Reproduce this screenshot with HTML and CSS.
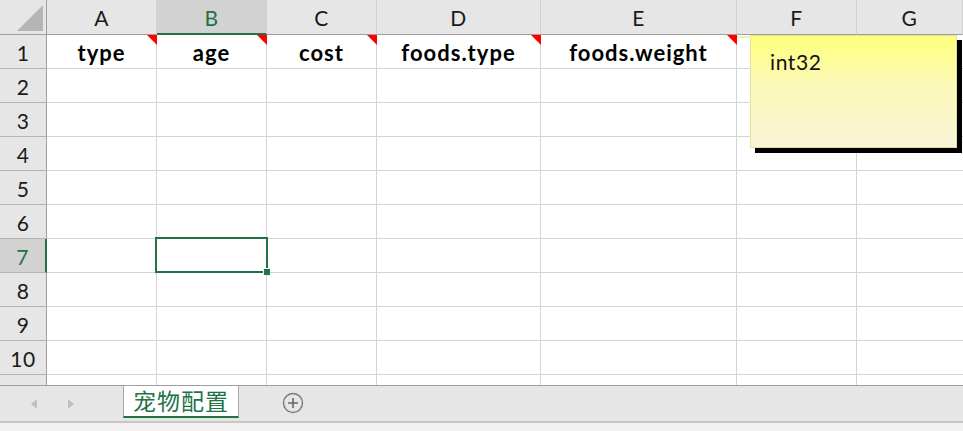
FILE: index.html
```html
<!DOCTYPE html>
<html lang="zh">
<head>
<meta charset="utf-8">
<title>宠物配置</title>
<link rel="stylesheet" href="styles.css">
</head>
<body>
<div class="app">
  <div class="sheet">
    <div class="corner"><span class="corner-tri"></span></div>
    <div class="colhead">A</div>
    <div class="colhead sel">B</div>
    <div class="colhead">C</div>
    <div class="colhead">D</div>
    <div class="colhead">E</div>
    <div class="colhead">F</div>
    <div class="colhead">G</div>

    <div class="rowhead">1</div>
    <div class="cell hdr">type<span class="note"></span></div>
    <div class="cell hdr">age<span class="note"></span></div>
    <div class="cell hdr">cost<span class="note"></span></div>
    <div class="cell hdr">foods.type<span class="note"></span></div>
    <div class="cell hdr">foods.weight<span class="note"></span></div>
    <div class="cell"></div>
    <div class="cell last"></div>

    <div class="rowhead">2</div>
    <div class="cell"></div><div class="cell"></div><div class="cell"></div><div class="cell"></div><div class="cell"></div><div class="cell"></div><div class="cell last"></div>
    <div class="rowhead">3</div>
    <div class="cell"></div><div class="cell"></div><div class="cell"></div><div class="cell"></div><div class="cell"></div><div class="cell"></div><div class="cell last"></div>
    <div class="rowhead">4</div>
    <div class="cell"></div><div class="cell"></div><div class="cell"></div><div class="cell"></div><div class="cell"></div><div class="cell"></div><div class="cell last"></div>
    <div class="rowhead">5</div>
    <div class="cell"></div><div class="cell"></div><div class="cell"></div><div class="cell"></div><div class="cell"></div><div class="cell"></div><div class="cell last"></div>
    <div class="rowhead">6</div>
    <div class="cell"></div><div class="cell"></div><div class="cell"></div><div class="cell"></div><div class="cell"></div><div class="cell"></div><div class="cell last"></div>
    <div class="rowhead sel">7</div>
    <div class="cell"></div>
    <div class="cell active"><span class="selbox"><span class="handle"></span></span></div>
    <div class="cell"></div><div class="cell"></div><div class="cell"></div><div class="cell"></div><div class="cell last"></div>
    <div class="rowhead">8</div>
    <div class="cell"></div><div class="cell"></div><div class="cell"></div><div class="cell"></div><div class="cell"></div><div class="cell"></div><div class="cell last"></div>
    <div class="rowhead">9</div>
    <div class="cell"></div><div class="cell"></div><div class="cell"></div><div class="cell"></div><div class="cell"></div><div class="cell"></div><div class="cell last"></div>
    <div class="rowhead">10</div>
    <div class="cell"></div><div class="cell"></div><div class="cell"></div><div class="cell"></div><div class="cell"></div><div class="cell"></div><div class="cell last"></div>
    <div class="rowhead partial"></div>
    <div class="cell partial"></div><div class="cell partial"></div><div class="cell partial"></div><div class="cell partial"></div><div class="cell partial"></div><div class="cell partial"></div><div class="cell partial last"></div>

    <div class="comment">
      <span class="comment-link"></span>
      <div class="comment-text">int32</div>
    </div>
  </div>

  <div class="tabbar">
    <div class="nav">
      <span class="arrow left"></span>
      <span class="arrow right"></span>
    </div>
    <div class="tab">宠物配置</div>
    <div class="add">
      <svg width="22" height="22" viewBox="0 0 22 22">
        <circle cx="11" cy="11" r="9.5" fill="none" stroke="#7a7a7a" stroke-width="1.4"/>
        <path d="M11 6v10M6 11h10" stroke="#6a6a6a" stroke-width="1.6"/>
      </svg>
    </div>
  </div>
  <div class="status"></div>
</div>
</body>
</html>
```

FILE: styles.css
```css
* { box-sizing: border-box; }
html, body { margin: 0; padding: 0; background: #fff; }
body {
  font-family: Lato, "Liberation Sans", "Noto Sans CJK SC", sans-serif;
  color: #000;
  width: 963px;
  height: 431px;
  overflow: hidden;
}
.app { width: 963px; }

.sheet {
  position: relative;
  display: grid;
  grid-template-columns: 47px 110px 110px 110px 164px 196px 120px 1fr;
  grid-template-rows: 35px repeat(10, 34px) 10px;
  height: 385px;
  overflow: hidden;
}

.corner {
  position: relative;
  background: #e6e6e6;
  border-right: 1px solid #9e9e9e;
  border-bottom: 1px solid #9e9e9e;
}
.corner-tri {
  position: absolute;
  right: 3px;
  bottom: 3px;
  width: 0;
  height: 0;
  border-bottom: 26px solid #b5b5b5;
  border-left: 26px solid transparent;
}

.colhead {
  background: #e6e6e6;
  border-right: 1px solid #d0d0d0;
  border-bottom: 1px solid #9e9e9e;
  display: flex;
  align-items: center;
  justify-content: center;
  font-size: 21px;
  letter-spacing: 0.5px;
  color: #1a1a1a;
  padding-top: 1px;
}
.colhead.sel {
  background: #d2d2d2;
  color: #217346;
  border-bottom: 2px solid #217346;
  padding-top: 2px;
}

.rowhead {
  background: #e6e6e6;
  border-right: 1px solid #9e9e9e;
  border-bottom: 1px solid #b4b4b4;
  display: flex;
  align-items: center;
  justify-content: center;
  font-size: 21px;
  letter-spacing: 0.5px;
  color: #1a1a1a;
  padding-top: 2px;
}
.rowhead.sel {
  background: #d2d2d2;
  color: #217346;
  border-right: 2px solid #217346;
}
.rowhead.partial, .cell.partial { border-bottom: none; }

.cell {
  position: relative;
  border-right: 1px solid #d4d4d4;
  border-bottom: 1px solid #d4d4d4;
}
.cell.last { border-right: none; }
.cell.hdr {
  display: flex;
  align-items: center;
  justify-content: center;
  font-weight: 700;
  font-size: 22px;
  letter-spacing: 1px;
  padding-top: 1px;
}
.note {
  position: absolute;
  top: 0;
  right: -1px;
  width: 0;
  height: 0;
  border-top: 10px solid #ff0000;
  border-left: 10px solid transparent;
}

.selbox {
  position: absolute;
  left: -2px;
  top: -2px;
  width: 113px;
  height: 36px;
  border: 2px solid #217346;
  z-index: 2;
}
.handle {
  position: absolute;
  right: -4px;
  bottom: -4px;
  width: 7px;
  height: 7px;
  background: #217346;
  border-left: 1px solid #fff;
  border-top: 1px solid #fff;
}

.comment {
  position: absolute;
  left: 750px;
  top: 35px;
  width: 207px;
  height: 113px;
  border: 1px solid #e3df9f;
  background: linear-gradient(to bottom, #ffff7e 0%, #fbf9b8 45%, #f8f4d8 100%);
  box-shadow: 5px 5px 0 0 #000;
  z-index: 3;
}
.comment-link {
  position: absolute;
  left: -14px;
  top: 0;
  width: 14px;
  height: 2px;
  background: #f3efb4;
}
.comment-text {
  font-size: 21px;
  letter-spacing: 0.6px;
  color: #111;
  padding: 14px 0 0 19px;
  line-height: 24px;
}

.tabbar {
  display: flex;
  align-items: stretch;
  height: 38px;
  background: #e6e6e6;
  border-top: 1px solid #9e9e9e;
  border-bottom: 2px solid #c6c6c6;
}
.nav {
  width: 123px;
  display: flex;
  align-items: center;
  padding-left: 31px;
  gap: 31px;
}
.arrow {
  width: 0;
  height: 0;
  border-top: 5px solid transparent;
  border-bottom: 5px solid transparent;
}
.arrow.left { border-right: 6px solid #c0c0c0; }
.arrow.right { border-left: 6px solid #c0c0c0; }

.tab {
  width: 116px;
  height: 32px;
  background: #fff;
  border-left: 1px solid #a8a8a8;
  border-right: 1px solid #a8a8a8;
  border-bottom: 2px solid #217346;
  color: #217346;
  font-family: "Noto Sans CJK SC", sans-serif;
  font-size: 23px;
  letter-spacing: 1px;
  line-height: 29px;
  text-align: center;
}
.add {
  display: flex;
  align-items: center;
  padding-left: 43px;
  padding-bottom: 2px;
}

.status {
  height: 8px;
  background: #f3f2f1;
}
```
